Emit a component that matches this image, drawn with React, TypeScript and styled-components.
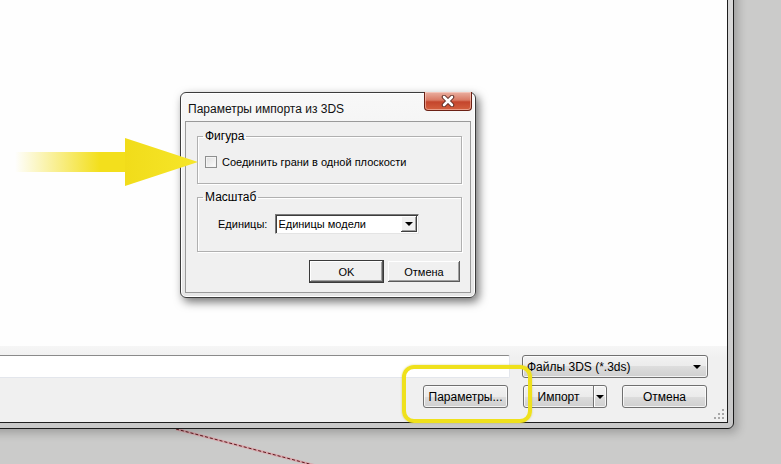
import React from 'react';
import styled, { createGlobalStyle } from 'styled-components';

const GlobalStyle = createGlobalStyle`
	html, body {
		margin: 0;
		padding: 0;
		background: #cbcbca;
	}
	body {
		font-family: 'Liberation Sans', Arial, sans-serif;
		font-size: 12px;
		color: #000;
	}
`;

const Desktop = styled.div`
	position: relative;
	width: 781px;
	height: 464px;
	overflow: hidden;
	background: #cbcbca;
`;

// pen trail left on the desktop below the window
const Trail = styled.svg`
	position: absolute;
	left: 0;
	top: 0;
	width: 781px;
	height: 464px;
`;

const FileWindow = styled.div`
	position: absolute;
	left: -20px;
	top: -20px;
	width: 754px;
	height: 449px;
	box-sizing: border-box;
	padding: 5px;
	border: 1px solid #1b1b1b;
	border-radius: 0 0 6px 6px;
	background: linear-gradient(#d9d9d9, #c8c8c8);
	box-shadow: 4px 4px 10px rgba(0, 0, 0, 0.22);
`;

const WindowBody = styled.div`
	height: 100%;
	box-sizing: border-box;
	border: 1px solid #1e1e1e;
	display: flex;
	flex-direction: column;
	background: #fefefe;
`;

const FileList = styled.div`
	flex: 1;
	background: #fefefe;
`;

const BottomPanel = styled.div`
	position: relative;
	height: 76px;
	box-sizing: border-box;
	padding: 9px 19px 0 0;
	display: flex;
	flex-direction: column;
	gap: 7px;
	background: linear-gradient(#f6f6f6, #f0f0f0 12px);
`;

const NameRow = styled.div`
	display: flex;
	gap: 12px;
	height: 23px;
`;

const FileNameBox = styled.div`
	flex: 1;
	box-sizing: border-box;
	display: flex;
	align-items: center;
	justify-content: flex-end;
	padding-right: 7px;
	background: #fff;
	border: 1px solid #e3e6ec;
	border-top-color: #8a8a8a;
	border-left: none;
	border-radius: 0 2px 2px 0;
`;

const DropArrow = styled.span<{ $color?: string }>`
	width: 0;
	height: 0;
	border-left: 4px solid transparent;
	border-right: 4px solid transparent;
	border-top: 4px solid ${(p) => p.$color || '#000'};
`;

const aeroFace = `
	box-sizing: border-box;
	border: 1px solid #707070;
	border-radius: 3px;
	background: linear-gradient(#f2f2f2, #ebebeb 50%, #dddddd 50%, #cfcfcf);
	box-shadow: inset 0 0 0 1px rgba(255, 255, 255, 0.75);
	font-family: 'Liberation Sans', Arial, sans-serif;
	font-size: 12px;
	color: #000;
`;

const TypeCombo = styled.div`
	${aeroFace}
	width: 186px;
	display: flex;
	align-items: center;
	justify-content: space-between;
	padding: 0 6px 0 4px;
`;

const ButtonRow = styled.div`
	display: flex;
	justify-content: flex-end;
	gap: 15px;
	margin-right: 1px;
`;

const AeroButton = styled.div<{ $w: number }>`
	${aeroFace}
	width: ${(p) => p.$w}px;
	height: 23px;
	display: flex;
	align-items: center;
	justify-content: center;
`;

const SplitLabel = styled.span`
	flex: 1;
	text-align: center;
`;

const SplitArrow = styled.span`
	width: 13px;
	height: 100%;
	box-sizing: border-box;
	display: flex;
	align-items: center;
	justify-content: center;
	border-left: 1px solid #707070;
	box-shadow: inset 1px 0 0 #fff;
`;

const Grip = styled.svg`
	position: absolute;
	right: 3px;
	bottom: 3px;
`;

const Dialog = styled.div`
	position: absolute;
	left: 180px;
	top: 92px;
	width: 296px;
	height: 206px;
	box-sizing: border-box;
	padding: 0 4px 4px;
	display: flex;
	flex-direction: column;
	border: 1px solid #3c3c3c;
	border-radius: 6px;
	background: linear-gradient(#f8f8f8, #e6e6e6);
	box-shadow: 3px 4px 10px rgba(0, 0, 0, 0.55), inset 0 0 0 1px #fff;
`;

const TitleBar = styled.div`
	height: 29px;
	display: flex;
	align-items: flex-start;
	justify-content: space-between;
`;

const Title = styled.span`
	margin: 9px 0 0 3px;
	line-height: 15px;
	color: #111;
`;

const CloseButton = styled.div`
	width: 48px;
	height: 19px;
	margin: -1px -1px 0 0;
	box-sizing: border-box;
	display: flex;
	align-items: center;
	justify-content: center;
	border: 1px solid #6b2014;
	border-top: none;
	border-radius: 0 0 4px 4px;
	background: linear-gradient(#eab0a2, #d97a64 45%, #c4452c 55%, #d4603f);
	box-shadow: inset 0 0 0 1px rgba(255, 220, 210, 0.5);
`;

const Panel = styled.div`
	flex: 1;
	box-sizing: border-box;
	padding: 7px 8px 9px 11px;
	display: flex;
	flex-direction: column;
	gap: 6px;
	border: 1px solid #9a9a9a;
	background: #f0f0f0;
	font-size: 11px;
`;

const Group = styled.fieldset<{ $h: number }>`
	margin: 0;
	padding: 0 0 0 7px;
	height: ${(p) => p.$h}px;
	box-sizing: border-box;
	border: 1px solid #b0b0b0;
	box-shadow: 1px 1px 0 #fff, inset 1px 1px 0 #fff;
	min-inline-size: 0;
`;

const Caption = styled.legend`
	padding: 0 2px;
	margin-left: -2px;
	line-height: 14px;
	font-size: 12px;
`;

const CheckRow = styled.label`
	display: flex;
	align-items: center;
	gap: 5px;
	margin-top: 12px;
	line-height: 14px;
`;

const CheckBox = styled.span`
	width: 12px;
	height: 12px;
	box-sizing: border-box;
	border: 1px solid #8e8f8f;
	background: linear-gradient(135deg, #dedede, #fdfdfd);
	box-shadow: inset 0 0 0 1px #f4f4f4;
`;

const UnitsRow = styled.div`
	display: flex;
	align-items: center;
	gap: 8px;
	margin: 10px 0 0 13px;
`;

const UnitsCombo = styled.div`
	width: 144px;
	height: 20px;
	box-sizing: border-box;
	display: flex;
	align-items: center;
	justify-content: space-between;
	padding: 0 1px 0 2px;
	background: #fff;
	border: 1px solid #7a7a7a;
	border-right-color: #e4e4e4;
	border-bottom-color: #e4e4e4;
	box-shadow: inset 1px 1px 0 #3c3c3c;
`;

const ComboButton = styled.span`
	width: 16px;
	height: 16px;
	box-sizing: border-box;
	display: flex;
	align-items: center;
	justify-content: center;
	background: #f0f0f0;
	box-shadow: inset -1px -1px 0 #404040, inset 1px 1px 0 #fff, inset -2px -2px 0 #a0a0a0;
`;

const DialogButtons = styled.div`
	display: flex;
	justify-content: flex-end;
	gap: 3px;
	margin-top: 2px;
	margin-right: 1px;
`;

const ClassicButton = styled.div<{ $w: number; $primary?: boolean }>`
	width: ${(p) => p.$w}px;
	height: 23px;
	box-sizing: border-box;
	display: flex;
	align-items: center;
	justify-content: center;
	background: #f0f0f0;
	border: 1px solid ${(p) => (p.$primary ? '#3a3a3a' : '#f0f0f0')};
	box-shadow: inset -1px -1px 0 #5a5a5a, inset 1px 1px 0 #fff, inset -2px -2px 0 #a0a0a0;
	color: #000;
`;

const Highlight = styled.div`
	position: absolute;
	left: 402px;
	top: 365px;
	width: 130px;
	height: 58px;
	box-sizing: border-box;
	border: 4px solid #efe11c;
	border-radius: 12px;
	box-shadow: 0 0 2px rgba(170, 160, 0, 0.5);
`;

const Pointer = styled.svg`
	position: absolute;
	left: 0;
	top: 130px;
`;

const App = (): JSX.Element => {
	return (
		<Desktop>
			<GlobalStyle />
			<Trail viewBox="0 0 781 464">
				<line x1="176" y1="429" x2="340" y2="472" stroke="#d9a6ab" strokeWidth="2.5" />
				<line x1="176" y1="429" x2="340" y2="472" stroke="#5e1a1f" strokeWidth="1" strokeDasharray="3 2" />
			</Trail>

			<FileWindow>
				<WindowBody>
					<FileList />
					<BottomPanel>
						<NameRow>
							<FileNameBox>
								<DropArrow $color="#6a6a6a" />
							</FileNameBox>
							<TypeCombo>
								<span>Файлы 3DS (*.3ds)</span>
								<DropArrow />
							</TypeCombo>
						</NameRow>
						<ButtonRow>
							<AeroButton $w={85}>Параметры...</AeroButton>
							<AeroButton $w={84}>
								<SplitLabel>Импорт</SplitLabel>
								<SplitArrow>
									<DropArrow />
								</SplitArrow>
							</AeroButton>
							<AeroButton $w={85}>Отмена</AeroButton>
						</ButtonRow>
						<Grip width="10" height="10" viewBox="0 0 10 10">
							<g fill="#a8a8a8">
								<rect x="8" y="0" width="2" height="2" />
								<rect x="4" y="4" width="2" height="2" />
								<rect x="8" y="4" width="2" height="2" />
								<rect x="0" y="8" width="2" height="2" />
								<rect x="4" y="8" width="2" height="2" />
								<rect x="8" y="8" width="2" height="2" />
							</g>
						</Grip>
					</BottomPanel>
				</WindowBody>
			</FileWindow>

			<Dialog>
				<TitleBar>
					<Title>Параметры импорта из 3DS</Title>
					<CloseButton>
						<svg width="14" height="12" viewBox="0 0 14 12">
							<path d="M3 2 L11 10 M11 2 L3 10" stroke="#5a2a22" strokeWidth="4.5" strokeLinecap="round" />
							<path d="M3 2 L11 10 M11 2 L3 10" stroke="#fff" strokeWidth="2.6" strokeLinecap="round" />
						</svg>
					</CloseButton>
				</TitleBar>
				<Panel>
					<Group $h={55}>
						<Caption>Фигура</Caption>
						<CheckRow>
							<CheckBox />
							<span>Соединить грани в одной плоскости</span>
						</CheckRow>
					</Group>
					<Group $h={62}>
						<Caption>Масштаб</Caption>
						<UnitsRow>
							<span>Единицы:</span>
							<UnitsCombo>
								<span>Единицы модели</span>
								<ComboButton>
									<DropArrow />
								</ComboButton>
							</UnitsCombo>
						</UnitsRow>
					</Group>
					<DialogButtons>
						<ClassicButton $w={75} $primary>
							OK
						</ClassicButton>
						<ClassicButton $w={74}>Отмена</ClassicButton>
					</DialogButtons>
				</Panel>
			</Dialog>

			<Pointer width="205" height="62" viewBox="0 0 205 62">
				<defs>
					<linearGradient id="shaft" x1="15" y1="0" x2="128" y2="0" gradientUnits="userSpaceOnUse">
						<stop offset="0" stopColor="#f3df1c" stopOpacity="0" />
						<stop offset="0.75" stopColor="#f3df1c" stopOpacity="1" />
					</linearGradient>
					<linearGradient id="head" x1="125" y1="0" x2="198" y2="0" gradientUnits="userSpaceOnUse">
						<stop offset="0" stopColor="#f1dc1a" />
						<stop offset="1" stopColor="#f6e62a" />
					</linearGradient>
				</defs>
				<rect x="15" y="22" width="112" height="20" fill="url(#shaft)" />
				<polygon points="125,8 198,32 125,56" fill="url(#head)" />
			</Pointer>

			<Highlight />
		</Desktop>
	);
};

export default App;
